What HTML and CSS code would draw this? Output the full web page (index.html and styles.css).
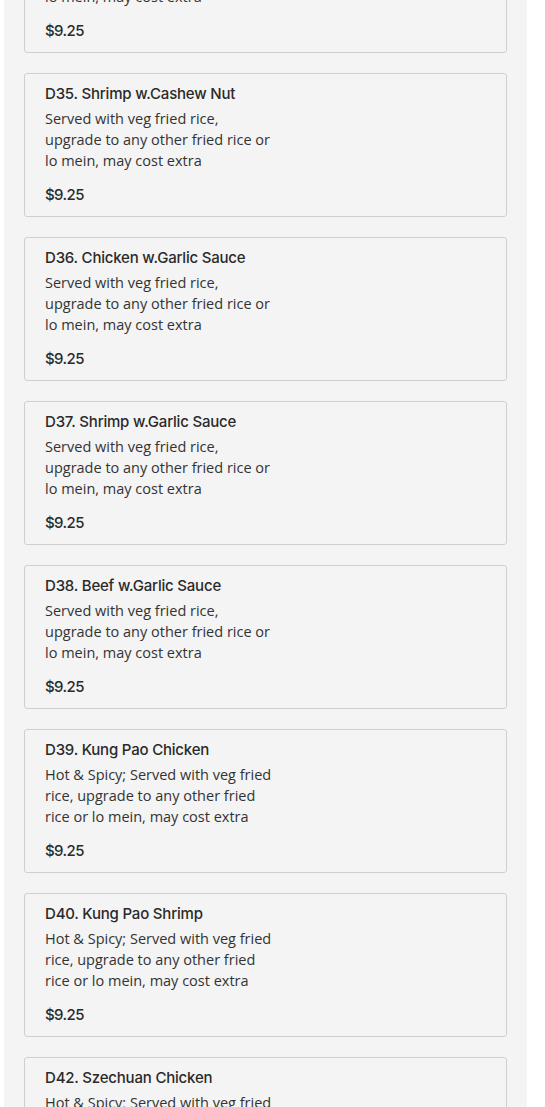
FILE: index.html
```html
<!DOCTYPE html>
<html>
<head>
<meta charset="utf-8">
<link rel="stylesheet" href="styles.css">
</head>
<body>
<div class="menu">
  <div class="item">
    <div class="name">D34. Chicken w.Cashew Nut</div>
    <div class="desc">Served with veg fried rice, upgrade to any other fried rice or lo mein, may cost extra</div>
    <div class="price">$9.25</div>
  </div>
  <div class="item">
    <div class="name">D35. Shrimp w.Cashew Nut</div>
    <div class="desc">Served with veg fried rice, upgrade to any other fried rice or lo mein, may cost extra</div>
    <div class="price">$9.25</div>
  </div>
  <div class="item">
    <div class="name">D36. Chicken w.Garlic Sauce</div>
    <div class="desc">Served with veg fried rice, upgrade to any other fried rice or lo mein, may cost extra</div>
    <div class="price">$9.25</div>
  </div>
  <div class="item">
    <div class="name">D37. Shrimp w.Garlic Sauce</div>
    <div class="desc">Served with veg fried rice, upgrade to any other fried rice or lo mein, may cost extra</div>
    <div class="price">$9.25</div>
  </div>
  <div class="item">
    <div class="name">D38. Beef w.Garlic Sauce</div>
    <div class="desc">Served with veg fried rice, upgrade to any other fried rice or lo mein, may cost extra</div>
    <div class="price">$9.25</div>
  </div>
  <div class="item">
    <div class="name">D39. Kung Pao Chicken</div>
    <div class="desc">Hot &amp; Spicy; Served with veg fried rice, upgrade to any other fried rice or lo mein, may cost extra</div>
    <div class="price">$9.25</div>
  </div>
  <div class="item">
    <div class="name">D40. Kung Pao Shrimp</div>
    <div class="desc">Hot &amp; Spicy; Served with veg fried rice, upgrade to any other fried rice or lo mein, may cost extra</div>
    <div class="price">$9.25</div>
  </div>
  <div class="item">
    <div class="name">D42. Szechuan Chicken</div>
    <div class="desc">Hot &amp; Spicy; Served with veg fried rice, upgrade to any other fried rice or lo mein, may cost extra</div>
    <div class="price">$9.25</div>
  </div>
</div>
</body>
</html>
```

FILE: styles.css
```css
html, body {
  margin: 0;
  padding: 0;
  background: #ffffff;
}
body {
  overflow: hidden;
  height: 1107px;
}
.menu {
  width: 523px;
  margin-left: 4px;
  margin-top: -91px;
  background: #f4f4f4;
  padding: 0 20px;
  box-sizing: border-box;
  display: flex;
  flex-direction: column;
  gap: 20px;
}
.item {
  border: 1px solid #cfcfcf;
  border-radius: 3px;
  background: #f4f4f4;
  padding: 10px 20px 11px;
  height: 144px;
  box-sizing: border-box;
  display: flex;
  flex-direction: column;
}
.name {
  font-family: Inter, "Liberation Sans", sans-serif;
  font-weight: 500;
  font-size: 15px;
  line-height: 20px;
  color: #2a2a2a;
  letter-spacing: -0.2px;
}
.desc {
  font-family: "Open Sans", sans-serif;
  font-size: 14.5px;
  line-height: 21px;
  color: #333;
  max-width: 229px;
  margin-top: 4px;
}
.price {
  font-family: Inter, "Liberation Sans", sans-serif;
  font-weight: 500;
  font-size: 15px;
  line-height: 20px;
  color: #2a2a2a;
  margin-top: 14px;
  letter-spacing: -0.6px;
}
```
